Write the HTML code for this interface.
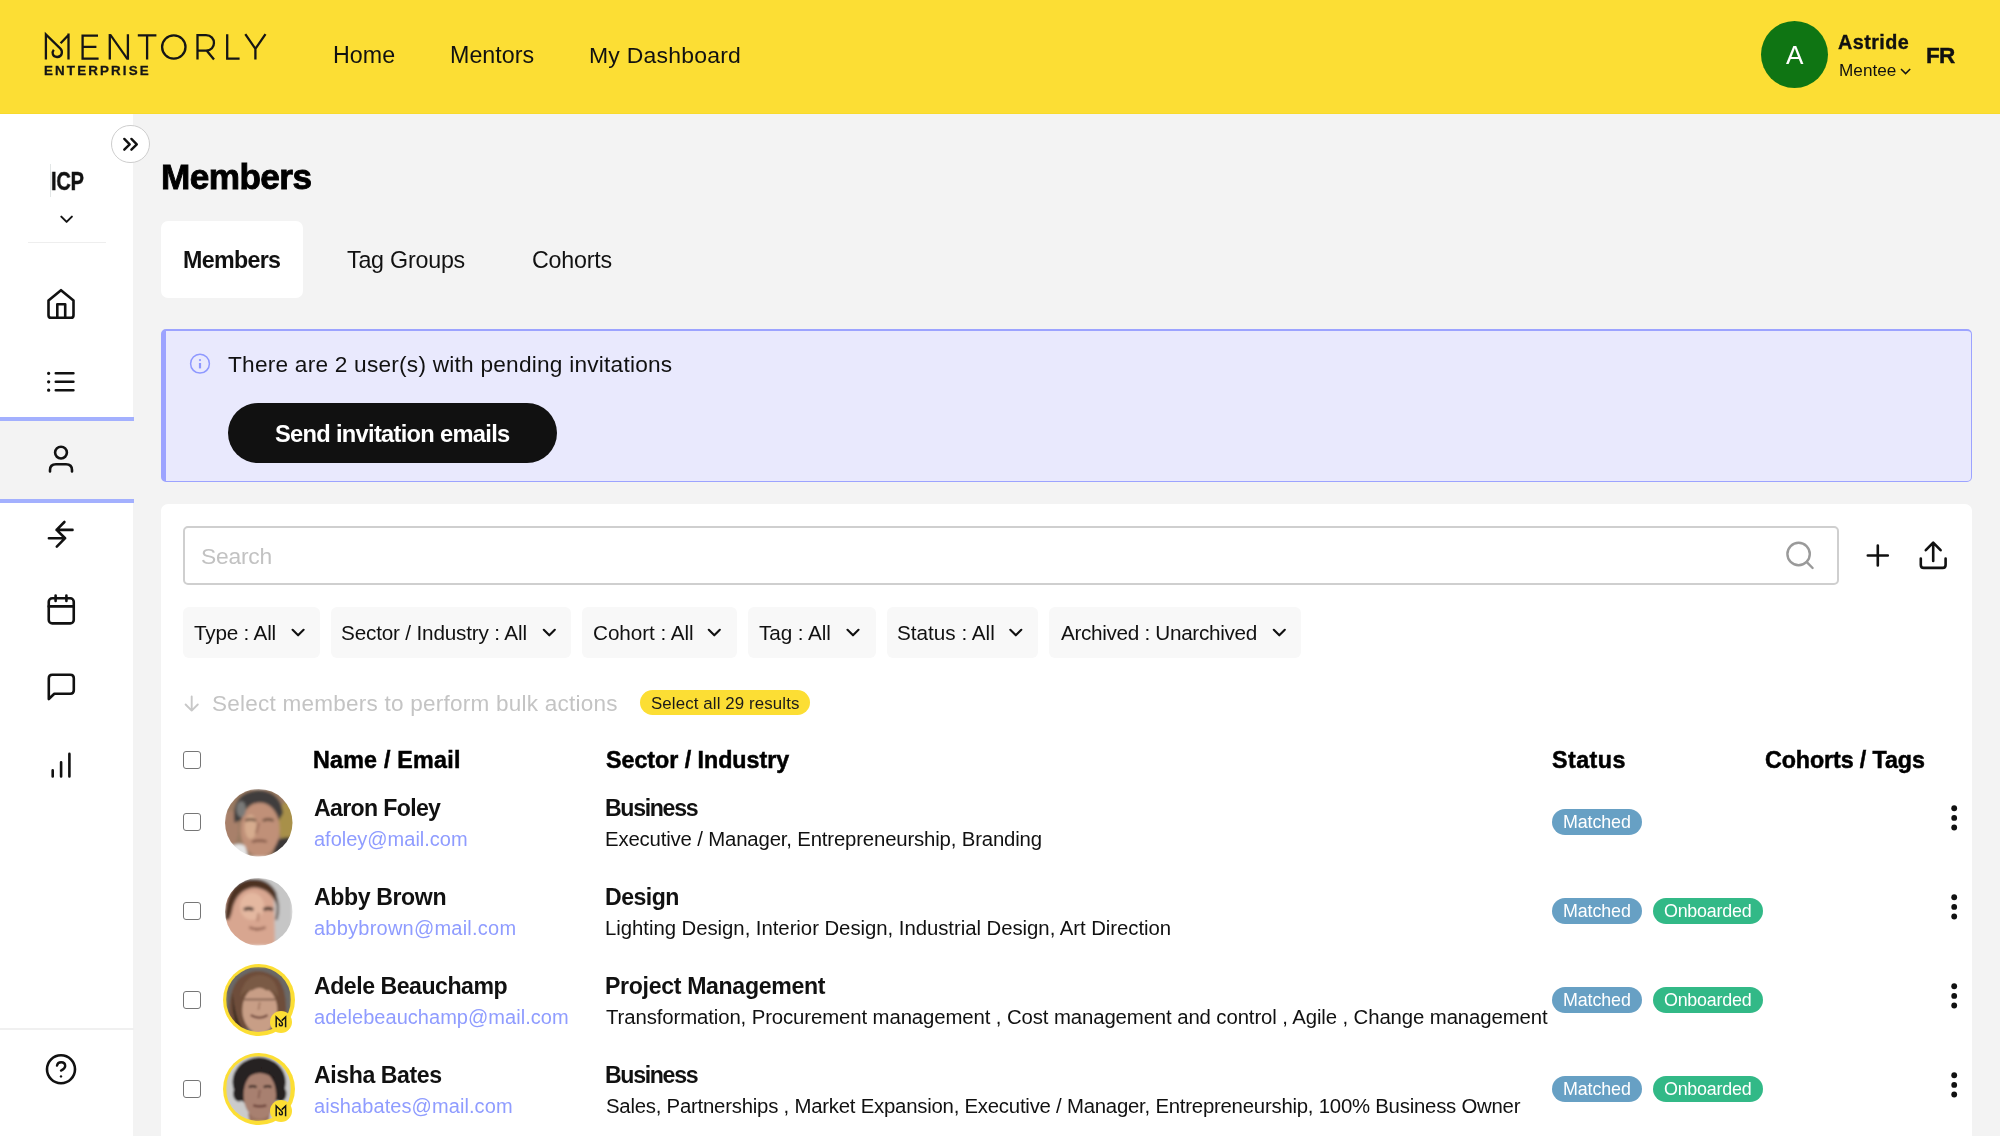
<!DOCTYPE html>
<html><head><meta charset="utf-8"><title>Members</title>
<style>
*{margin:0;padding:0;box-sizing:border-box}
html,body{width:2000px;height:1136px;overflow:hidden;background:#F3F3F3;font-family:"Liberation Sans",sans-serif;color:#111}
.a{position:absolute}
.t{position:absolute;white-space:nowrap;will-change:transform}
svg{position:absolute;overflow:visible}
</style></head><body>

<div class="a" style="left:0;top:0;width:2000px;height:114px;background:#FCDE34;border-bottom:1px solid #F8DA2C"></div>
<svg style="left:0;top:0" width="300" height="100" viewBox="0 0 300 100" fill="none" stroke="#151515" stroke-width="2.3">
<path d="M45.9 59.6 V34.5 L60.4 48.6 C62.8 51 62.6 56.8 57.3 57 C52.4 57.2 51.6 52.4 53.8 49.8" stroke-linejoin="miter" stroke-miterlimit="10"/>
<path d="M60.6 43.2 L68.5 35 M68.5 33.5 V59.6"/>
<path d="M98 35.6 H82.6 V58.6 H98.6 M82.6 46.8 H96.4"/>
<path d="M109.8 34.2 V59.6 M127.9 34.2 V59.6" />
<polygon points="108.65,34.2 111.3,34.2 129.05,59.6 126.4,59.6" fill="#151515" stroke="none"/>
<path d="M137.8 35.4 H156.4 M147.1 34.2 V59.6"/>
<circle cx="173.8" cy="47" r="11.7"/>
<path d="M197.5 59.6 V35.2 H206 C216.6 35.2 216.6 50.6 206 50.6 H197.5 M206.6 50.6 L214 59.6"/>
<path d="M227.2 34.2 V58.6 H239.6"/>
<path d="M245.3 34.2 L255.4 48.8 L265.5 34.2 M255.4 48.8 V59.6"/>
</svg>
<div class="t" style="left:43.73px;top:64px;font-size:13.37px;line-height:13.37px;letter-spacing:2.143px;font-weight:700;color:#151515;-webkit-text-stroke:0.3px #151515;">ENTERPRISE</div>
<div class="t" style="left:332.84px;top:44px;font-size:23.26px;line-height:23.26px;letter-spacing:0.038px;font-weight:400;color:#111;">Home</div>
<div class="t" style="left:449.74px;top:44px;font-size:23.26px;line-height:23.26px;letter-spacing:0.020px;font-weight:400;color:#111;">Mentors</div>
<div class="t" style="left:588.66px;top:44px;font-size:22.97px;line-height:22.97px;letter-spacing:0.222px;font-weight:400;color:#111;">My Dashboard</div>
<div class="a" style="left:1760.7px;top:21.3px;width:67px;height:67px;border-radius:50%;background:#0F7513"></div>
<div class="t" style="left:1785.80px;top:42px;font-size:26.16px;line-height:26.16px;letter-spacing:0.000px;font-weight:400;color:#fff;">A</div>
<div class="t" style="left:1838.31px;top:33px;font-size:19.77px;line-height:19.77px;letter-spacing:0.431px;font-weight:700;color:#111;-webkit-text-stroke:0.35px #111;">Astride</div>
<div class="t" style="left:1838.63px;top:62px;font-size:17.15px;line-height:17.15px;letter-spacing:0.032px;font-weight:400;color:#111;">Mentee</div>
<svg style="left:1900px;top:68px" width="12" height="7" viewBox="0 0 12 7" fill="none" stroke="#151515" stroke-width="1.5"><path d="M1 1 L5.6 5.6 L10.2 1"/></svg>
<div class="t" style="left:1926.34px;top:45px;font-size:22.53px;line-height:22.53px;letter-spacing:-0.749px;font-weight:700;color:#111;-webkit-text-stroke:0.4px #111;">FR</div>
<div class="a" style="left:0;top:114px;width:133.3px;height:1022px;background:#fff"></div>
<div class="a" style="left:50px;top:164px;width:1px;height:33px;background:#E2E6E6"></div>
<div class="t" style="left:50.62px;top:169px;font-size:25.29px;line-height:25.29px;font-weight:700;transform:scaleX(0.7807);transform-origin:0 0;color:#111;-webkit-text-stroke:0.5px #111">ICP</div>
<svg style="left:0;top:0" width="100" height="240" viewBox="0 0 100 240" fill="none" stroke="#151515" stroke-width="2" stroke-linecap="round" stroke-linejoin="round"><path d="M61.3 216.6 L66.6 221.9 L71.9 216.6"/></svg>
<div class="a" style="left:28px;top:241.5px;width:77.5px;height:1.5px;background:#EEEEEE"></div>
<div class="a" style="left:0;top:416.5px;width:133.5px;height:86px;background:#F3F3F3;border-top:4.3px solid #A3B0FE;border-bottom:4.3px solid #A3B0FE"></div>
<svg style="left:0;top:0" width="134" height="1136" viewBox="0 0 134 1136" fill="none" stroke="#111" stroke-width="2.6" stroke-linecap="round" stroke-linejoin="round">
<path d="M48.5 315.2 V300.4 L61 290.2 L73.5 300.4 V315.2 Q73.5 317.8 70.9 317.8 H51.1 Q48.5 317.8 48.5 315.2 Z"/>
<path d="M57.3 317.6 V304.2 H65.2 V317.6"/>
<path d="M55.8 373.3 H73.4 M55.8 381.8 H73.4 M55.8 390.2 H73.4"/>
<path d="M48.6 373.3 h0.1 M48.6 381.8 h0.1 M48.6 390.2 h0.1" stroke-width="3.2"/>
<circle cx="61" cy="452.6" r="5.9"/>
<path d="M50 471.5 V470 Q50 464.2 56 464.2 H66 Q72 464.2 72 470 V471.5"/>
<path d="M64.4 522 L56.6 529.9 L65.1 538.2 L56.8 546.6 M56.6 529.9 H72.5 M48.9 538.2 H65.1"/>
<rect x="48.75" y="598.3" width="25" height="25.1" rx="3.5"/>
<path d="M48.75 606.4 H73.75 M55.6 595.5 V601 M66.4 595.5 V601"/>
<path d="M48.8 699 V678.3 Q48.8 674.8 52.3 674.8 H70.3 Q73.8 674.8 73.8 678.3 V690.3 Q73.8 693.8 70.3 693.8 H54.3 Z"/>
<path d="M52.7 776.5 V770.4 M61.1 776.5 V762.2 M69.4 776.5 V753.9"/>
<circle cx="61" cy="1069.3" r="14"/>
<path d="M57 1065.6 Q57.6 1062.2 61.2 1062.2 Q65.2 1062.2 65.2 1066 Q65.2 1068.6 61 1070.6" stroke-width="2.4"/>
<circle cx="61" cy="1076.4" r="1.2" fill="#111" stroke="none"/>
</svg>
<div class="a" style="left:0;top:1028.2px;width:133.5px;height:2px;background:#F0F0F0"></div>
<div class="a" style="left:111.2px;top:125.1px;width:38.4px;height:38.4px;border-radius:50%;background:#fff;border:1.5px solid #CDCDCD"></div>
<svg style="left:0;top:0" width="160" height="170" viewBox="0 0 160 170" fill="none" stroke="#111" stroke-width="2.4" stroke-linecap="round" stroke-linejoin="round"><path d="M124.3 138.9 L129.7 144.3 L124.3 149.7 M131.4 138.9 L136.8 144.3 L131.4 149.7"/></svg>
<div class="t" style="left:160.51px;top:159px;font-size:35.17px;line-height:35.17px;letter-spacing:-0.570px;font-weight:700;color:#000;-webkit-text-stroke:0.9px #000;">Members</div>
<div class="a" style="left:161.25px;top:221.25px;width:141.75px;height:76.75px;background:#fff;border-radius:7px"></div>
<div class="t" style="left:182.99px;top:249px;font-size:23.26px;line-height:23.26px;letter-spacing:-0.692px;font-weight:700;color:#111;">Members</div>
<div class="t" style="left:347.03px;top:249px;font-size:23.26px;line-height:23.26px;letter-spacing:-0.217px;font-weight:400;color:#111;">Tag Groups</div>
<div class="t" style="left:531.84px;top:249px;font-size:23.26px;line-height:23.26px;letter-spacing:-0.195px;font-weight:400;color:#111;">Cohorts</div>
<div class="a" style="left:161px;top:329px;width:811px;height:152.6px;"></div>
<div class="a" style="left:161px;top:329px;width:1811px;height:152.6px;background:#E9E9FD;border:1.6px solid #9CA3FF;border-top-width:2px;border-left:5.7px solid #9CA3FF;border-radius:5px"></div>
<svg style="left:0;top:0" width="300" height="400" viewBox="0 0 300 400" fill="none" stroke="#8E98FF" stroke-width="1.5"><circle cx="200" cy="363.7" r="9.4"/><path d="M200 363 V368.4" stroke-width="2.2"/><circle cx="200" cy="360.1" r="1.1" fill="#8E98FF" stroke="none"/></svg>
<div class="t" style="left:227.75px;top:353px;font-size:22.67px;line-height:22.67px;letter-spacing:0.225px;font-weight:400;color:#111;">There are 2 user(s) with pending invitations</div>
<div class="a" style="left:227.9px;top:402.9px;width:329px;height:60.4px;border-radius:31px;background:#111"></div>
<div class="t" style="left:274.89px;top:423px;font-size:23.69px;line-height:23.69px;letter-spacing:-0.710px;font-weight:700;color:#fff;">Send invitation emails</div>
<div class="a" style="left:161px;top:503.8px;width:1811px;height:700px;background:#fff;border-radius:7px"></div>
<div class="a" style="left:183.3px;top:526.2px;width:1656px;height:58.5px;border:2px solid #CFCFCF;border-radius:5px"></div>
<div class="t" style="left:201.27px;top:545px;font-size:22.82px;line-height:22.82px;letter-spacing:-0.206px;font-weight:400;color:#C2C2C2;">Search</div>
<svg style="left:0;top:0" width="2000" height="600" viewBox="0 0 2000 600" fill="none" stroke-linecap="round"><circle cx="1798.6" cy="554" r="11.2" stroke="#9A9A9A" stroke-width="2.4"/><path d="M1806.8 562.2 L1812.6 568" stroke="#9A9A9A" stroke-width="2.4"/><path d="M1877.8 545.5 V565.5 M1867.8 555.5 H1887.8" stroke="#111" stroke-width="2.6"/><path d="M1933.2 543 V561 M1925.8 550.2 L1933.2 542.6 L1940.6 550.2" stroke="#111" stroke-width="2.6" stroke-linejoin="round"/><path d="M1920.8 558.6 V565 Q1920.8 567.9 1923.7 567.9 H1942.7 Q1945.6 567.9 1945.6 565 V558.6" stroke="#111" stroke-width="2.6" stroke-linejoin="round"/></svg>
<div class="a" style="left:183.4px;top:606.8px;width:136.6px;height:51.4px;background:#F8F8F8;border-radius:6px"></div>
<div class="t" style="left:193.79px;top:623px;font-size:20.71px;line-height:20.71px;letter-spacing:-0.203px;font-weight:400;color:#111;">Type : All</div>
<div class="a" style="left:331.1px;top:606.8px;width:240.0px;height:51.4px;background:#F8F8F8;border-radius:6px"></div>
<div class="t" style="left:341.37px;top:623px;font-size:20.71px;line-height:20.71px;letter-spacing:-0.175px;font-weight:400;color:#111;">Sector / Industry : All</div>
<div class="a" style="left:582.3px;top:606.8px;width:154.5px;height:51.4px;background:#F8F8F8;border-radius:6px"></div>
<div class="t" style="left:592.56px;top:623px;font-size:20.71px;line-height:20.71px;letter-spacing:-0.064px;font-weight:400;color:#111;">Cohort : All</div>
<div class="a" style="left:748.0px;top:606.8px;width:127.5px;height:51.4px;background:#F8F8F8;border-radius:6px"></div>
<div class="t" style="left:758.89px;top:623px;font-size:20.71px;line-height:20.71px;letter-spacing:-0.079px;font-weight:400;color:#111;">Tag : All</div>
<div class="a" style="left:887.1px;top:606.8px;width:150.7px;height:51.4px;background:#F8F8F8;border-radius:6px"></div>
<div class="t" style="left:897.17px;top:623px;font-size:20.71px;line-height:20.71px;letter-spacing:-0.008px;font-weight:400;color:#111;">Status : All</div>
<div class="a" style="left:1049.4px;top:606.8px;width:251.6px;height:51.4px;background:#F8F8F8;border-radius:6px"></div>
<div class="t" style="left:1061.20px;top:623px;font-size:20.71px;line-height:20.71px;letter-spacing:-0.316px;font-weight:400;color:#111;">Archived : Unarchived</div>
<svg style="left:0;top:0" width="2000" height="700" viewBox="0 0 2000 700" fill="none" stroke="#111" stroke-width="2.1" stroke-linecap="round" stroke-linejoin="round"><path d="M292.6 629.8 L298.1 635.3 L303.6 629.8 M543.8 629.8 L549.3 635.3 L554.8 629.8 M708.8 629.8 L714.3 635.3 L719.8 629.8 M847.5 629.8 L853.0 635.3 L858.5 629.8 M1010.3 629.8 L1015.8 635.3 L1021.3 629.8 M1273.8 629.8 L1279.3 635.3 L1284.8 629.8"/></svg>
<svg style="left:0;top:0" width="220" height="720" viewBox="0 0 220 720" fill="none" stroke="#C8C8C8" stroke-width="1.9" stroke-linecap="round" stroke-linejoin="round"><path d="M191.7 696.5 V710.5 M185.6 704.5 L191.7 710.6 L197.8 704.5"/></svg>
<div class="t" style="left:211.74px;top:693px;font-size:22.53px;line-height:22.53px;letter-spacing:0.239px;font-weight:400;color:#C4C4C4;">Select members to perform bulk actions</div>
<div class="a" style="left:639.5px;top:690.1px;width:170.8px;height:24.9px;border-radius:13px;background:#FCDE34"></div>
<div class="t" style="left:650.84px;top:696px;font-size:16.86px;line-height:16.86px;letter-spacing:0.113px;font-weight:400;color:#1A1A1A;">Select all 29 results</div>
<div class="a" style="left:183.25px;top:750.75px;width:18px;height:18px;border:1.6px solid #767676;border-radius:3px;background:#fff"></div>
<div class="t" style="left:313.49px;top:749px;font-size:23.26px;line-height:23.26px;letter-spacing:0.238px;font-weight:700;color:#000;-webkit-text-stroke:0.5px #000;">Name / Email</div>
<div class="t" style="left:605.60px;top:749px;font-size:23.26px;line-height:23.26px;letter-spacing:-0.023px;font-weight:700;color:#000;-webkit-text-stroke:0.5px #000;">Sector / Industry</div>
<div class="t" style="left:1551.80px;top:749px;font-size:23.26px;line-height:23.26px;letter-spacing:0.466px;font-weight:700;color:#000;-webkit-text-stroke:0.5px #000;">Status</div>
<div class="t" style="left:1765.32px;top:749px;font-size:23.26px;line-height:23.26px;letter-spacing:-0.091px;font-weight:700;color:#000;-webkit-text-stroke:0.5px #000;">Cohorts / Tags</div>
<div class="a" style="left:183.25px;top:813.25px;width:18px;height:18px;border:1.6px solid #767676;border-radius:3px;background:#fff"></div>
<svg style="left:224.80px;top:788.50px" width="67.5" height="67.5" viewBox="0 0 100 100"><defs><clipPath id="av0"><circle cx="50" cy="50" r="50"/></clipPath><filter id="bl0" x="-10%" y="-10%" width="120%" height="120%"><feGaussianBlur stdDeviation="2"/></filter></defs><g clip-path="url(#av0)"><g filter="url(#bl0)"><rect width="100" height="100" fill="#9A7A62"/><ellipse cx="93" cy="50" rx="14" ry="32" fill="#A89048"/><ellipse cx="8" cy="58" rx="12" ry="26" fill="#A8806A"/><path d="M70 100 L76 76 Q90 70 100 72 V100 Z" fill="#3A3838"/><path d="M6 86 Q20 78 30 84 L34 100 H0 Z" fill="#E6E6E6"/><ellipse cx="52" cy="60" rx="29" ry="40" fill="#C09078"/><ellipse cx="38" cy="56" rx="9" ry="18" fill="#D6AC8E"/><path d="M14 50 Q8 6 48 2 Q82 2 86 36 L80 46 Q72 20 50 20 Q30 22 24 46 Z" fill="#403E3E"/><ellipse cx="24" cy="30" rx="7" ry="12" fill="#7A7A78"/><path d="M30 47 Q38 43 46 47 M56 47 Q64 43 72 47" stroke="#5A4030" stroke-width="3.5" fill="none"/><path d="M50 50 L46 66" stroke="#9A6A58" stroke-width="3"/><path d="M40 78 Q52 75 62 78" stroke="#7A5040" stroke-width="3" fill="none"/></g></g></svg>
<div class="t" style="left:313.62px;top:797px;font-size:23.11px;line-height:23.11px;letter-spacing:-0.659px;font-weight:700;color:#111;">Aaron Foley</div>
<div class="t" style="left:313.70px;top:829px;font-size:20.00px;line-height:20.00px;letter-spacing:-0.007px;font-weight:400;color:#8F9CFF;">afoley@mail.com</div>
<div class="t" style="left:605.00px;top:797px;font-size:23.11px;line-height:23.11px;letter-spacing:-1.314px;font-weight:700;color:#111;">Business</div>
<div class="t" style="left:604.87px;top:829px;font-size:20.35px;line-height:20.35px;letter-spacing:-0.160px;font-weight:400;color:#111;">Executive / Manager, Entrepreneurship, Branding</div>
<div class="a" style="left:1552px;top:809.10px;width:89.8px;height:25.8px;border-radius:13px;background:#67A0C4"></div>
<div class="t" style="left:1562.97px;top:814px;font-size:17.88px;line-height:17.88px;letter-spacing:-0.110px;font-weight:400;color:#fff;">Matched</div>
<div class="a" style="left:183.25px;top:902.25px;width:18px;height:18px;border:1.6px solid #767676;border-radius:3px;background:#fff"></div>
<svg style="left:224.80px;top:877.50px" width="67.5" height="67.5" viewBox="0 0 100 100"><defs><clipPath id="av1"><circle cx="50" cy="50" r="50"/></clipPath><filter id="bl1" x="-10%" y="-10%" width="120%" height="120%"><feGaussianBlur stdDeviation="2"/></filter></defs><g clip-path="url(#av1)"><g filter="url(#bl1)"><rect width="100" height="100" fill="#C6C6C6"/><path d="M0 30 Q5 8 40 8 Q70 8 73 40 L74 100 H0 Z" fill="#D8A690"/><ellipse cx="40" cy="42" rx="18" ry="20" fill="#E4B8A0"/><path d="M0 62 Q0 8 35 2 Q64 -2 76 22 L80 48 Q70 16 44 14 Q20 16 12 42 Q10 54 6 62 Z" fill="#4E3222"/><path d="M73 22 Q82 40 76 62" stroke="#4A3A30" stroke-width="3" fill="none"/><path d="M28 47 Q35 43 42 47 M57 47 Q64 43 71 47" stroke="#2A1A18" stroke-width="4.5" fill="none"/><path d="M50 52 L48 64" stroke="#B07E6A" stroke-width="3"/><path d="M36 73 Q48 79 60 73" stroke="#8A5A4A" stroke-width="3.5" fill="none"/></g></g></svg>
<div class="t" style="left:313.62px;top:886px;font-size:23.11px;line-height:23.11px;letter-spacing:-0.395px;font-weight:700;color:#111;">Abby Brown</div>
<div class="t" style="left:313.70px;top:918px;font-size:20.00px;line-height:20.00px;letter-spacing:0.229px;font-weight:400;color:#8F9CFF;">abbybrown@mail.com</div>
<div class="t" style="left:605.00px;top:886px;font-size:23.11px;line-height:23.11px;letter-spacing:-0.537px;font-weight:700;color:#111;">Design</div>
<div class="t" style="left:604.87px;top:918px;font-size:20.35px;line-height:20.35px;letter-spacing:-0.040px;font-weight:400;color:#111;">Lighting Design, Interior Design, Industrial Design, Art Direction</div>
<div class="a" style="left:1552px;top:898.10px;width:89.8px;height:25.8px;border-radius:13px;background:#67A0C4"></div>
<div class="t" style="left:1562.97px;top:903px;font-size:17.88px;line-height:17.88px;letter-spacing:-0.110px;font-weight:400;color:#fff;">Matched</div>
<div class="a" style="left:1652.8px;top:898.10px;width:109.8px;height:25.8px;border-radius:13px;background:#32B987"></div>
<div class="t" style="left:1663.60px;top:903px;font-size:17.88px;line-height:17.88px;letter-spacing:-0.225px;font-weight:400;color:#fff;">Onboarded</div>
<div class="a" style="left:183.25px;top:991.25px;width:18px;height:18px;border:1.6px solid #767676;border-radius:3px;background:#fff"></div>
<div class="a" style="left:222.7px;top:963.80px;width:72px;height:72px;border-radius:50%;background:#FCDE34"></div>
<svg style="left:226.20px;top:967.30px" width="65" height="65" viewBox="0 0 100 100"><defs><clipPath id="av2"><circle cx="50" cy="50" r="50"/></clipPath><filter id="bl2" x="-10%" y="-10%" width="120%" height="120%"><feGaussianBlur stdDeviation="2"/></filter></defs><g clip-path="url(#av2)"><g filter="url(#bl2)"><rect width="100" height="100" fill="#6A6866"/><path d="M6 95 Q0 40 20 18 Q48 -6 80 18 Q98 40 90 95 Z" fill="#6E4E3A"/><path d="M10 40 Q14 80 26 96 L18 96 Q8 70 10 40 Z" fill="#3A2A20"/><ellipse cx="52" cy="66" rx="27" ry="36" fill="#C89E86"/><path d="M22 46 Q26 14 52 12 Q80 14 80 46 Q72 34 62 36 Q52 28 40 36 Q30 34 22 46 Z" fill="#7A5A44"/><path d="M28 50 H76" stroke="#7A5A4A" stroke-width="2.5"/><path d="M52 54 L50 66" stroke="#A87E68" stroke-width="3"/><path d="M38 74 Q52 82 64 74" stroke="#6A4034" stroke-width="3" fill="none"/></g></g></svg>
<div class="a" style="left:269.8px;top:1011.00px;width:22px;height:22px;border-radius:50%;background:#FCDE34"></div>
<svg style="left:274px;top:1015.00px" width="14" height="14" viewBox="0 0 14 14" fill="none" stroke="#151515" stroke-width="1.5"><path d="M2.2 12.2 V2 L7.8 7.4 C8.8 8.6 8.6 10.8 6.9 10.8 C5.4 10.8 5 9.2 5.8 8.4 M7.8 5.6 L11.6 2 V12.2"/></svg>
<div class="t" style="left:313.62px;top:975px;font-size:23.11px;line-height:23.11px;letter-spacing:-0.476px;font-weight:700;color:#111;">Adele Beauchamp</div>
<div class="t" style="left:313.70px;top:1007px;font-size:20.00px;line-height:20.00px;letter-spacing:0.041px;font-weight:400;color:#8F9CFF;">adelebeauchamp@mail.com</div>
<div class="t" style="left:605.00px;top:975px;font-size:23.11px;line-height:23.11px;letter-spacing:-0.329px;font-weight:700;color:#111;">Project Management</div>
<div class="t" style="left:606.09px;top:1007px;font-size:20.35px;line-height:20.35px;letter-spacing:-0.103px;font-weight:400;color:#111;">Transformation, Procurement management , Cost management and control , Agile , Change management</div>
<div class="a" style="left:1552px;top:987.10px;width:89.8px;height:25.8px;border-radius:13px;background:#67A0C4"></div>
<div class="t" style="left:1562.97px;top:992px;font-size:17.88px;line-height:17.88px;letter-spacing:-0.110px;font-weight:400;color:#fff;">Matched</div>
<div class="a" style="left:1652.8px;top:987.10px;width:109.8px;height:25.8px;border-radius:13px;background:#32B987"></div>
<div class="t" style="left:1663.60px;top:992px;font-size:17.88px;line-height:17.88px;letter-spacing:-0.225px;font-weight:400;color:#fff;">Onboarded</div>
<div class="a" style="left:183.25px;top:1080.25px;width:18px;height:18px;border:1.6px solid #767676;border-radius:3px;background:#fff"></div>
<div class="a" style="left:222.7px;top:1052.80px;width:72px;height:72px;border-radius:50%;background:#FCDE34"></div>
<svg style="left:226.20px;top:1056.30px" width="65" height="65" viewBox="0 0 100 100"><defs><clipPath id="av3"><circle cx="50" cy="50" r="50"/></clipPath><filter id="bl3" x="-10%" y="-10%" width="120%" height="120%"><feGaussianBlur stdDeviation="2"/></filter></defs><g clip-path="url(#av3)"><g filter="url(#bl3)"><rect width="100" height="100" fill="#CBCBCB"/><ellipse cx="51" cy="40" rx="41" ry="38" fill="#262020"/><ellipse cx="20" cy="58" rx="9" ry="12" fill="#262020"/><ellipse cx="84" cy="58" rx="9" ry="12" fill="#262020"/><path d="M34 88 L36 100 H66 L68 88 Z" fill="#9A7262"/><ellipse cx="52" cy="60" rx="25" ry="37" fill="#A88070"/><path d="M30 36 Q40 18 52 18 Q66 18 76 36 Q64 26 52 26 Q40 26 30 36 Z" fill="#262020"/><path d="M35 48 Q41 45 47 48 M58 48 Q64 45 70 48" stroke="#3A2A24" stroke-width="3.5" fill="none"/><path d="M52 52 L50 65" stroke="#8A6254" stroke-width="3"/><path d="M42 76 Q52 79 62 76" stroke="#6A4038" stroke-width="3.5" fill="none"/></g></g></svg>
<div class="a" style="left:269.8px;top:1100.00px;width:22px;height:22px;border-radius:50%;background:#FCDE34"></div>
<svg style="left:274px;top:1104.00px" width="14" height="14" viewBox="0 0 14 14" fill="none" stroke="#151515" stroke-width="1.5"><path d="M2.2 12.2 V2 L7.8 7.4 C8.8 8.6 8.6 10.8 6.9 10.8 C5.4 10.8 5 9.2 5.8 8.4 M7.8 5.6 L11.6 2 V12.2"/></svg>
<div class="t" style="left:313.62px;top:1064px;font-size:23.11px;line-height:23.11px;letter-spacing:-0.421px;font-weight:700;color:#111;">Aisha Bates</div>
<div class="t" style="left:313.70px;top:1096px;font-size:20.00px;line-height:20.00px;letter-spacing:0.083px;font-weight:400;color:#8F9CFF;">aishabates@mail.com</div>
<div class="t" style="left:605.00px;top:1064px;font-size:23.11px;line-height:23.11px;letter-spacing:-1.314px;font-weight:700;color:#111;">Business</div>
<div class="t" style="left:605.58px;top:1096px;font-size:20.35px;line-height:20.35px;letter-spacing:-0.225px;font-weight:400;color:#111;">Sales, Partnerships , Market Expansion, Executive / Manager, Entrepreneurship, 100% Business Owner</div>
<div class="a" style="left:1552px;top:1076.10px;width:89.8px;height:25.8px;border-radius:13px;background:#67A0C4"></div>
<div class="t" style="left:1562.97px;top:1081px;font-size:17.88px;line-height:17.88px;letter-spacing:-0.110px;font-weight:400;color:#fff;">Matched</div>
<div class="a" style="left:1652.8px;top:1076.10px;width:109.8px;height:25.8px;border-radius:13px;background:#32B987"></div>
<div class="t" style="left:1663.60px;top:1081px;font-size:17.88px;line-height:17.88px;letter-spacing:-0.225px;font-weight:400;color:#fff;">Onboarded</div>
<svg style="left:0;top:0" width="2000" height="1136" viewBox="0 0 2000 1136" fill="#111"><circle cx="1954.2" cy="808.25" r="2.9"/><circle cx="1954.2" cy="817.90" r="2.9"/><circle cx="1954.2" cy="827.50" r="2.9"/><circle cx="1954.2" cy="897.25" r="2.9"/><circle cx="1954.2" cy="906.90" r="2.9"/><circle cx="1954.2" cy="916.50" r="2.9"/><circle cx="1954.2" cy="986.25" r="2.9"/><circle cx="1954.2" cy="995.90" r="2.9"/><circle cx="1954.2" cy="1005.50" r="2.9"/><circle cx="1954.2" cy="1075.25" r="2.9"/><circle cx="1954.2" cy="1084.90" r="2.9"/><circle cx="1954.2" cy="1094.50" r="2.9"/></svg>
</body></html>
